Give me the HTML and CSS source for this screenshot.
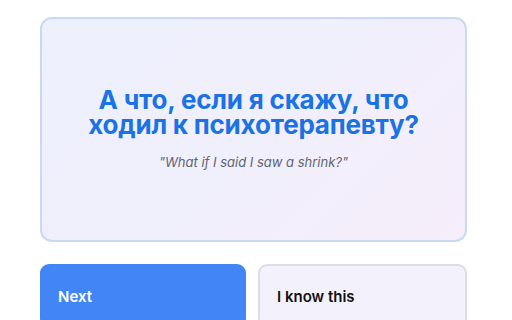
FILE: index.html
```html
<!DOCTYPE html>
<html lang="ru">
<head>
    <meta charset="UTF-8">
    <meta name="viewport" content="width=device-width, initial-scale=1.0">
    <title>Flashcard</title>
    <link rel="stylesheet" href="styles.css">
</head>
<body>

    <div class="container">
        <!-- Phrase card -->
        <div class="card">
            <h1 class="phrase">А что, если я скажу, что ходил к психотерапевту?</h1>
            <p class="translation">"What if I said I saw a shrink?"</p>
        </div>

        <div class="actions">
            <button class="btn next">Next</button>
            <button class="btn known">I know this</button>
        </div>
    </div>

</body>
</html>
```

FILE: styles.css
```css
body {
    font-family: Inter, "Noto Sans", sans-serif;
    margin: 0;
    padding: 0;
    background: #ffffff;
}
.container {
    width: 427px;
    margin: 0 0 0 40px;
    padding-top: 17px;
}
.card {
    box-sizing: border-box;
    height: 225px;
    border: 2px solid #c9d8f5;
    border-radius: 12px;
    background: linear-gradient(135deg, #edf0fd 0%, #f1effc 55%, #f6eefa 100%);
    display: flex;
    flex-direction: column;
    justify-content: center;
    align-items: center;
    text-align: center;
    padding: 0 40px 2px;
}
.phrase {
    margin: 0;
    font-size: 26px;
    line-height: 25px;
    font-weight: 700;
    color: #1a72e4;
    letter-spacing: -0.2px;
}
.translation {
    margin: 17px 0 0;
    font-size: 13px;
    font-style: italic;
    color: #5f6470;
}
.actions {
    display: grid;
    grid-template-columns: 206px 1fr;
    gap: 12px;
    margin-top: 22px;
}
.btn {
    box-sizing: border-box;
    height: 64px;
    border-radius: 9px;
    text-align: left;
    padding: 0 18px 0;
    font-family: Inter, "Noto Sans", sans-serif;
    font-size: 15px;
    font-weight: 600;
    cursor: pointer;
}
.next {
    background: #4286f5;
    color: #ffffff;
    border: none;
}
.known {
    background: #f3f1fc;
    color: #111111;
    border: 2px solid #dedde6;
    padding-left: 17px;
}
```
